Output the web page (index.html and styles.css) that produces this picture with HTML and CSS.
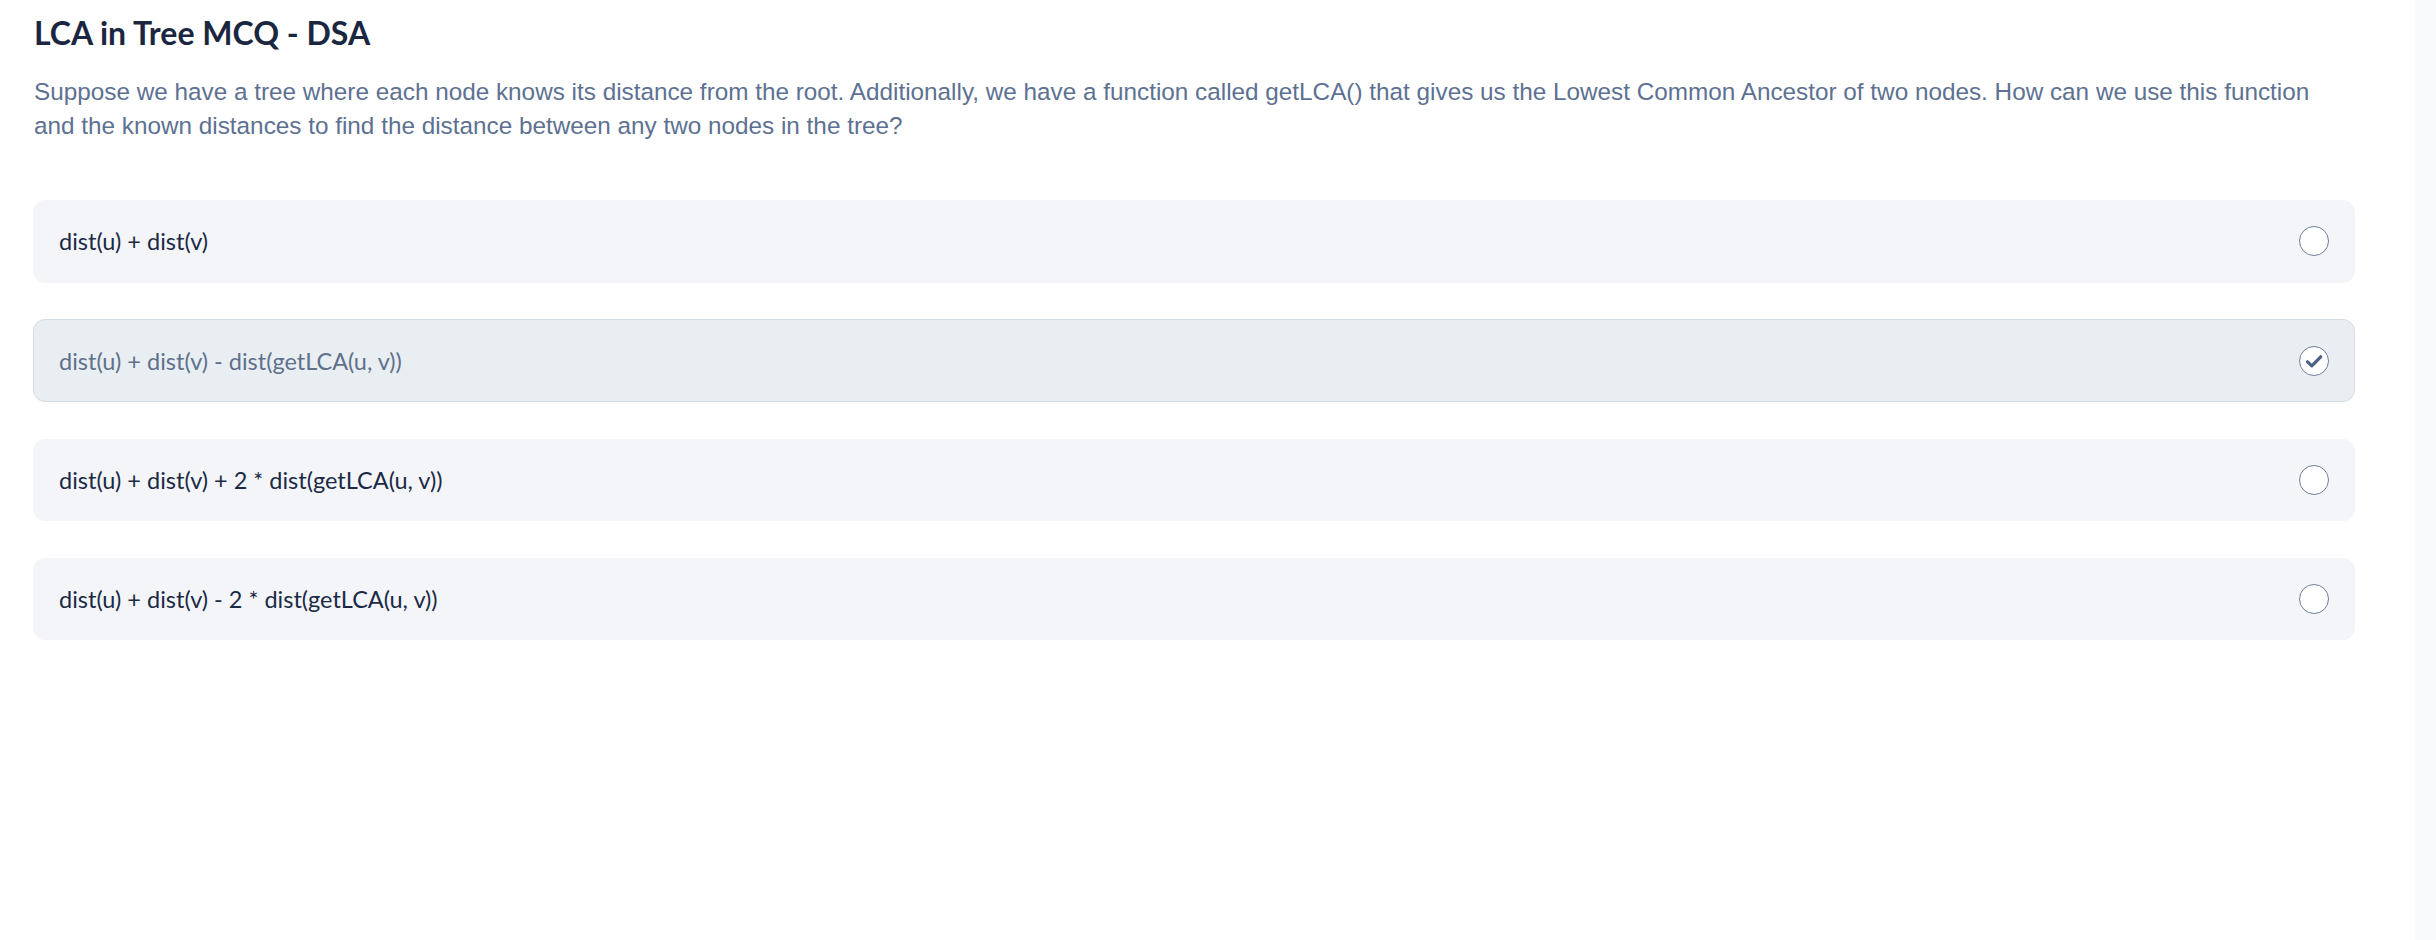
FILE: index.html
```html
<!DOCTYPE html>
<html lang="en">
<head>
<meta charset="utf-8">
<title>LCA in Tree MCQ - DSA</title>
<link rel="stylesheet" href="styles.css">
</head>
<body>
<div class="page">
  <main class="content">
    <h1 class="title">LCA in Tree MCQ - DSA</h1>
    <p class="question">Suppose we have a tree where each node knows its distance from the root. Additionally, we have a function called getLCA() that gives us the Lowest Common Ancestor of two nodes. How can we use this function and the known distances to find the distance between any two nodes in the tree?</p>
    <ul class="options">
      <li class="option">
        <span class="option-text">dist(u) + dist(v)</span>
        <span class="radio"></span>
      </li>
      <li class="option selected">
        <span class="option-text">dist(u) + dist(v) - dist(getLCA(u, v))</span>
        <span class="radio">
          <svg width="30" height="30" viewBox="0 0 30 30"><path d="M8.5 15.8 L12.8 19.8 L21.7 10.8" fill="none" stroke="#4b6282" stroke-width="3.2" stroke-linecap="round" stroke-linejoin="round"/></svg>
        </span>
      </li>
      <li class="option">
        <span class="option-text">dist(u) + dist(v) + 2 * dist(getLCA(u, v))</span>
        <span class="radio"></span>
      </li>
      <li class="option">
        <span class="option-text">dist(u) + dist(v) - 2 * dist(getLCA(u, v))</span>
        <span class="radio"></span>
      </li>
    </ul>
  </main>
  <aside class="scroll-track"></aside>
</div>
</body>
</html>
```
FILE: styles.css
```css
* { box-sizing: border-box; }
html, body { margin: 0; padding: 0; background: #ffffff; }
.page {
  display: flex;
  min-height: 940px;
}
.content {
  flex: 1;
  padding: 0 60px 0 33px;
}
.scroll-track {
  width: 21px;
  background: #f9fafb;
}
.title {
  margin: 0;
  padding: 11px 0 0 1px;
  font-family: Lato, "Noto Sans", sans-serif;
  font-weight: 700;
  font-size: 32px;
  line-height: 44px;
  color: #1b2640;
}
.question {
  margin: 20px 0 0 1px;
  max-width: 2300px;
  font-family: "Liberation Sans", Arial, sans-serif;
  font-size: 24.3px;
  line-height: 34px;
  color: #5d7192;
}
.options {
  list-style: none;
  margin: 57px 0 0;
  padding: 0;
  display: flex;
  flex-direction: column;
  gap: 36.8px;
}
.option {
  display: flex;
  align-items: center;
  justify-content: space-between;
  height: 82.5px;
  padding: 0 25px;
  background: #f3f5f9;
  border: 1px solid #f3f5f9;
  border-radius: 12px;
}
.option.selected {
  background: #e9eef3;
  border-color: #d4dce5;
}
.option-text {
  font-family: Lato, "Noto Sans", sans-serif;
  font-size: 23.5px;
  color: #1b2a45;
}
.option.selected .option-text { color: #60718b; }
.radio {
  width: 30px;
  height: 30px;
  border-radius: 50%;
  border: 1.3px solid #6f7f98;
  background: #ffffff;
  display: flex;
  align-items: center;
  justify-content: center;
}
.radio svg { display: block; margin: -1px; }
```
